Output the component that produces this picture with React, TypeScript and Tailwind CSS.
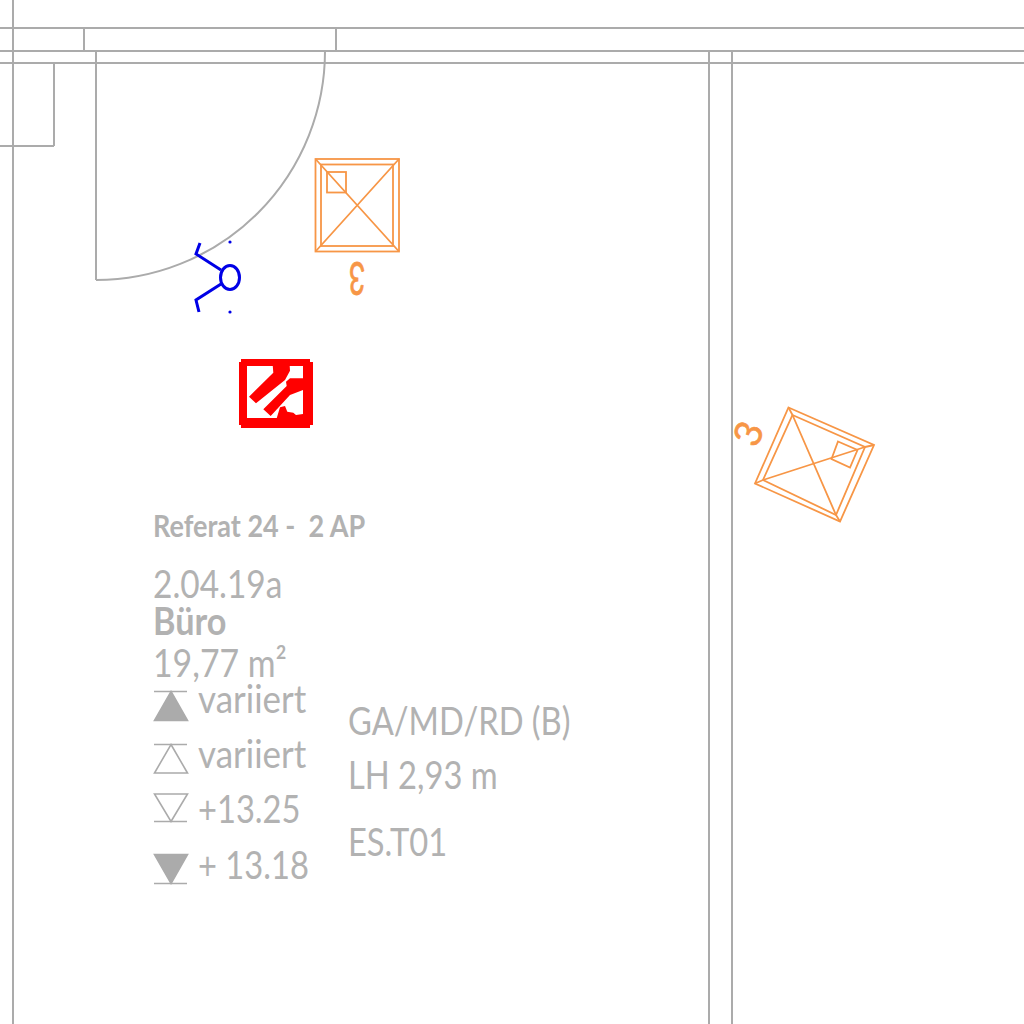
const wall = "#ababab";
const orange = "#f79646";
const blue = "#0000e6";

function Plan() {
  return (
    <svg className="absolute inset-0" width="1024" height="1024" viewBox="0 0 1024 1024" fill="none">
      {/* walls */}
      <g stroke={wall} strokeWidth="2">
        <path d="M0 28H1024M0 51H1024M0 63H1024" />
        <path d="M13 0V1024M84 28V51M336 28V51M96 51V280M54 63V146M0 146H54" />
        <path d="M709 51V1024M732 51V1024" />
      </g>
      {/* door swing */}
      <path d="M325 51A229 229 0 0 1 96 280" stroke={wall} strokeWidth="2" />

      {/* window sensors */}
      <g stroke={orange} strokeWidth="1.8">
        <rect x="315.5" y="159" width="83.5" height="92.5" />
        <rect x="321" y="164.5" width="72" height="81.5" />
        <rect x="327" y="172" width="19" height="20.5" />
        <path d="M315.5 159L399 251.5M399 159L315.5 251.5" />
      </g>
      <g stroke={orange} strokeWidth="1.8">
        <path d="M788.5 407.5L874 445L840 521.5L755 483.5Z" />
        <path d="M792.5 415L865 447L836 515L763 480Z" />
        <path d="M838 441.5L857.5 450L850 467.5L831.5 459Z" />
        <path d="M792.5 415L836 515M763 480L865 447M788.5 407.5L792.5 415M874 445L865 447M840 521.5L836 515M755 483.5L763 480" />
      </g>

      {/* blue switch symbol */}
      <g stroke={blue} strokeWidth="3">
        <ellipse cx="230" cy="277.5" rx="9.5" ry="12" />
        <path d="M200 243L196 254L221 270M221 284L196 300L199 312" />
      </g>
      <circle cx="230" cy="242" r="1.6" fill={blue} />
      <circle cx="230" cy="312" r="1.6" fill={blue} />

      {/* red marker */}
      <g fill="#ff0000">
        <path fillRule="evenodd" d="M239 362H241V359H310V362H313V425H310V428H241V425H239ZM247 366V418H303V366Z" />
        <path d="M249 396.7L273.3 372.7L272.7 365L289.3 360L290 370.7L285 380L256 403.3Z" />
        <path d="M263.3 409.3L286.7 386L286 381.7L290 378.3L303 378.3L303 390L290 395L270.7 416Z" />
        <path d="M276.7 418.3L280 407.3L285 406L287.3 411.7L293.3 412.7L296 415L303 414L303 418.3Z" />
      </g>
    </svg>
  );
}

type Level = { label: string; scale: string; height: string; filled: boolean; apex: number; base: number; rule: number };

const levels: Level[] = [
  { label: "variiert", scale: "scale-x-[0.92]", height: "h-[55px]", filled: true, apex: 11.5, base: 40.5, rule: 11.5 },
  { label: "variiert", scale: "scale-x-[0.92]", height: "h-[55px]", filled: false, apex: 9.5, base: 38, rule: 9.5 },
  { label: "+13.25", scale: "scale-x-[0.86]", height: "h-[56px]", filled: false, apex: 31.5, base: 4, rule: 31.5 },
  { label: "+ 13.18", scale: "scale-x-[0.86]", height: "h-[55px]", filled: true, apex: 37.5, base: 8.5, rule: 37.5 },
];

function LevelRow({ level }: { level: Level }) {
  const { apex, base, rule, filled } = level;
  return (
    <div className={`flex gap-[9px] ${level.height}`}>
      <svg width="36" height="55" viewBox="0 0 36 55" className="shrink-0" fill="none" stroke={wall} strokeWidth="1.6">
        <path d={`M1 ${rule}H34`} />
        <path d={`M18 ${apex}L34.5 ${base}H1.5Z`} fill={filled ? wall : "none"} />
      </svg>
      <div className={`h-[37px] origin-left whitespace-pre text-[38px] leading-[37px] ${level.scale}`}>{level.label}</div>
    </div>
  );
}

export default function App() {
  return (
    <div className="relative h-[1024px] w-[1024px] overflow-hidden bg-white font-['Lato','Carlito','Open_Sans',sans-serif] text-[#b2b2b2]">
      <Plan />

      {/* room stamp */}
      <div className="absolute left-[153px] top-[507px] flex flex-col">
        <div className="h-9 origin-left scale-x-[0.9] whitespace-pre text-[30px] font-bold leading-9">Referat 24 -  2 AP</div>
        <div className="mt-[22px] h-[37px] origin-left scale-x-[0.88] text-[38px] leading-[37px]">2.04.19a</div>
        <div className="h-[37px] origin-left scale-x-[0.9] text-[38px] font-bold leading-[37px]">Büro</div>
        <div className="mt-[5px] h-[37px] origin-left scale-x-[0.89] whitespace-pre text-[38px] leading-[37px]">19,77 m²</div>

        <div className="-mt-[1px] flex">
          <div className="flex w-[195px] flex-col">
            {levels.map((level, i) => (
              <LevelRow key={i} level={level} />
            ))}
          </div>
          <div className="flex origin-left scale-x-[0.86] flex-col whitespace-pre pt-[22px] text-[38px] leading-[37px]">
            <div>GA/MD/RD (B)</div>
            <div className="mt-[17px]">LH 2,93 m</div>
            <div className="mt-[30px]">ES.T01</div>
          </div>
        </div>
      </div>

      {/* sensor numbers */}
      <div className="absolute left-[337px] top-[257px] w-10 rotate-180 scale-x-[0.62] text-center text-[46px] leading-[44px] text-[#f79646] [-webkit-text-stroke:0.8px_#f79646]">3</div>
      <div className="absolute left-[727px] top-[421px] w-10 rotate-[-67deg] text-center text-[38px] leading-6 text-[#f79646] [-webkit-text-stroke:0.6px_#f79646]">3</div>
    </div>
  );
}
